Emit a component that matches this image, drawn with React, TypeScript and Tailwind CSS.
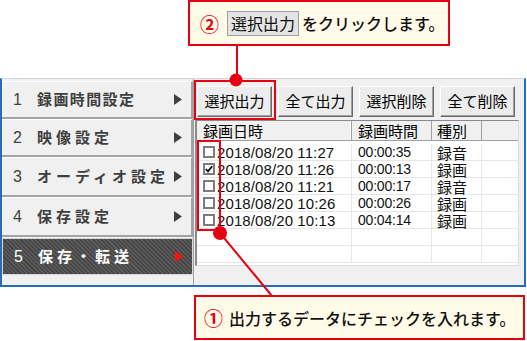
import React from "react";

const JP = { fontFamily: '"Noto Sans CJK JP", "Noto Sans", sans-serif' };
const NUM = { fontFamily: '"Liberation Sans", "Noto Sans CJK JP", sans-serif' };

function Tri({ color }: { color: string }) {
  return (
    <svg width="8" height="11" viewBox="0 0 8 11" className="shrink-0">
      <polygon points="0,0 8,5.5 0,11" fill={color} />
    </svg>
  );
}

function MenuItem({
  n,
  label,
  h,
  track,
  active,
}: {
  n: string;
  label: string;
  h: string;
  track: string;
  active?: boolean;
}) {
  return (
    <div
      className={
        active
          ? `${h} flex items-center justify-between pl-[11px] pr-[9px] border border-[#d8d8d8] bg-[repeating-linear-gradient(45deg,#474747_0px,#474747_1.5px,#5a5a5a_1.5px,#5a5a5a_3px)] text-white`
          : `${h} flex items-center justify-between pl-[11px] pr-[9px] bg-[#f0f0f0] border-t border-t-white border-b-2 border-b-[#a3a3a3] border-r-2 border-r-[#a3a3a3] text-[#3f3f3f]`
      }
    >
      <div className="flex items-center font-bold text-[15px]" style={JP}>
        <span className="inline-block w-[24px] text-[16px] font-normal" style={NUM}>
          {n}
        </span>
        <span className={track}>{label}</span>
      </div>
      <Tri color={active ? "#ff1010" : "#404040"} />
    </div>
  );
}

function Btn({ label }: { label: string }) {
  return (
    <div
      className="w-[75px] h-[31px] flex items-center justify-center bg-[#ececec] border border-t-white border-l-white border-r-[#696969] border-b-[#696969] shadow-[inset_-1px_-1px_0_#a0a0a0] text-[15px] text-black"
      style={JP}
    >
      {label}
    </div>
  );
}

const rows = [
  { d: "2018/08/20 11:27", t: "00:00:35", k: "録音", c: false },
  { d: "2018/08/20 11:26", t: "00:00:13", k: "録画", c: true },
  { d: "2018/08/20 11:21", t: "00:00:17", k: "録音", c: false },
  { d: "2018/08/20 10:26", t: "00:00:26", k: "録画", c: false },
  { d: "2018/08/20 10:13", t: "00:04:14", k: "録画", c: false },
  null,
  null,
];

function CheckBox({ checked }: { checked: boolean }) {
  return (
    <div className="w-[12px] h-[12px] border-2 border-[#7c7c7c] bg-white flex items-center justify-center shrink-0">
      {checked && (
        <svg width="8" height="8" viewBox="0 0 8 8">
          <path d="M0.8 4 L3 6.3 L7.2 1.2" stroke="#000" strokeWidth="1.8" fill="none" />
        </svg>
      )}
    </div>
  );
}

export default function App() {
  return (
    <div className="relative w-[527px] h-[341px] bg-white overflow-hidden">
      {/* top callout */}
      <div
        className="ml-[188px] w-[262px] h-[46px] border-2 border-[#e60012] bg-[#fffbe8] flex items-center pl-[10px]"
        style={JP}
      >
        <span className="text-[#e60012] font-bold text-[19px] leading-none">②</span>
        <div className="ml-[8px] w-[72px] h-[25px] bg-[#e4e4e4] border border-[#a0a0a0] flex items-center justify-center text-[16px] text-[#111]">
          選択出力
        </div>
        <span className="ml-[3px] text-[16px] font-medium text-[#111]">をクリックします。</span>
      </div>

      {/* window */}
      <div className="mt-[32px] w-[526px] h-[209px] border-l-2 border-r-2 border-b-2 border-[#2a6cb4] border-t border-t-[#d6d6d6] bg-[#f0f0f0] flex">
        {/* menu */}
        <div className="w-[191px] pt-[2px] flex flex-col">
          <MenuItem n="1" label="録画時間設定" h="h-[38px]" track="tracking-[1.4px]" />
          <MenuItem n="2" label="映像設定" h="h-[38px]" track="tracking-[4px]" />
          <MenuItem n="3" label="オーディオ設定" h="h-[40px]" track="tracking-[4px]" />
          <MenuItem n="4" label="保存設定" h="h-[40px]" track="tracking-[4px]" />
          <div className="h-[1px]" />
          <MenuItem n="5" label="保存・転送" h="h-[37px]" track="tracking-[4px]" active />
        </div>
        {/* separator */}
        <div className="w-[1px] bg-[#a0a0a0]" />
        {/* right panel */}
        <div className="flex-1 flex flex-col">
          <div className="mt-[7px] ml-[3px] flex gap-[6px]">
            <Btn label="選択出力" />
            <Btn label="全て出力" />
            <Btn label="選択削除" />
            <Btn label="全て削除" />
          </div>
          <div className="mt-[3px] ml-[1px] w-[324px] h-[146px] border-t border-l-2 border-[#8a8a8a] border-r border-r-[#dcdcdc] border-b border-b-[#dcdcdc] bg-white flex flex-col">
            {/* header */}
            <div className="h-[20px] flex bg-[#f0f0f0] border-b border-[#a0a0a0] text-[15px] text-black" style={JP}>
              <div className="w-[155px] pl-[6px] border-r border-r-[#a0a0a0] shadow-[inset_-1px_0_0_#fff] flex items-center leading-none">
                録画日時
              </div>
              <div className="w-[80px] pl-[6px] border-r border-r-[#a0a0a0] flex items-center leading-none">
                録画時間
              </div>
              <div className="w-[50px] pl-[5px] border-r border-r-[#a0a0a0] flex items-center leading-none">
                種別
              </div>
              <div className="flex-1" />
            </div>
            <div className="pt-[3px] flex flex-col">
              {rows.map((r, i) => (
                <div key={i} className="h-[17px] flex border-b border-[#e6e6e6] text-[14px] text-[#111]">
                  <div className="w-[155px] border-r border-[#e6e6e6] flex items-center pl-[6px] overflow-hidden">
                    {r && <CheckBox checked={r.c} />}
                    {r && (
                      <span className="ml-[2px] leading-none text-[15px] tracking-[0.1px] whitespace-nowrap" style={NUM}>
                        {r.d}
                      </span>
                    )}
                  </div>
                  <div className="w-[80px] border-r border-[#e6e6e6] flex items-center pl-[6px]">
                    {r && (
                      <span className="leading-none tracking-[-0.2px]" style={NUM}>
                        {r.t}
                      </span>
                    )}
                  </div>
                  <div className="w-[50px] border-r border-[#e6e6e6] flex items-center pl-[5px]">
                    {r && (
                      <span className="leading-none text-[15px]" style={JP}>
                        {r.k}
                      </span>
                    )}
                  </div>
                  <div className="flex-1" />
                </div>
              ))}
            </div>
          </div>
        </div>
      </div>

      {/* bottom callout */}
      <div
        className="mt-[8px] ml-[194px] w-[331px] h-[45px] border-2 border-[#e60012] bg-[#fffbe8] flex items-center pl-[8px]"
        style={JP}
      >
        <span className="text-[#e60012] font-bold text-[19px] leading-none">①</span>
        <span className="ml-[6px] text-[16px] font-medium text-[#111]">出力するデータにチェックを入れます。</span>
      </div>

      {/* highlight boxes */}
      <div className="absolute left-[194px] top-[80px] w-[82px] h-[40px] border-2 border-[#e60012]" />
      <div className="absolute left-[197px] top-[140px] w-[24px] h-[91px] border-2 border-[#e60012]" />

      {/* connector lines and dots */}
      <svg className="absolute left-0 top-0 pointer-events-none" width="527" height="341">
        <line x1="237" y1="46" x2="237" y2="80" stroke="#e60012" strokeWidth="2" />
        <circle cx="236" cy="80" r="6.5" fill="#e60012" />
        <line x1="220" y1="233" x2="272" y2="296" stroke="#e60012" strokeWidth="2" />
        <circle cx="220" cy="233" r="7" fill="#e60012" />
      </svg>
    </div>
  );
}
